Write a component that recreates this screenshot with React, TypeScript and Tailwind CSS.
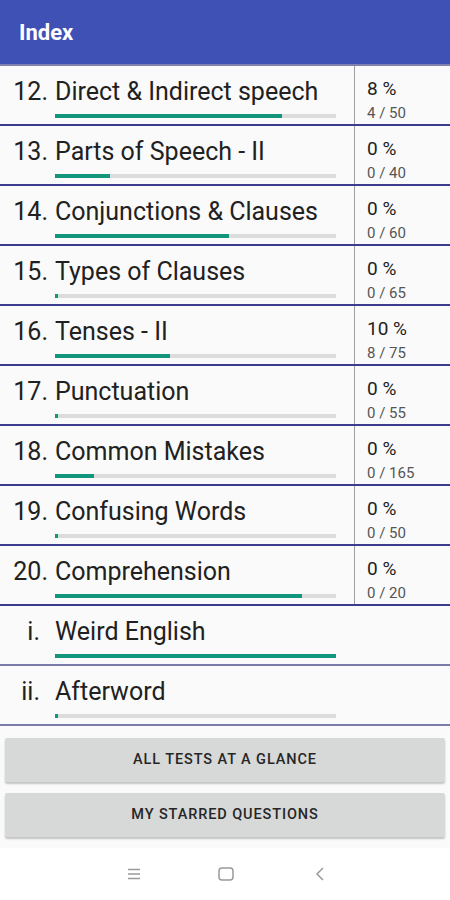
import React from 'react';

interface Chapter {
  num: string;
  title: string;
  fill: number;
  percent?: string;
  count?: string;
}

const chapters: Chapter[] = [
  { num: '12.', title: 'Direct & Indirect speech', fill: 227, percent: '8 %', count: '4 / 50' },
  { num: '13.', title: 'Parts of Speech - II', fill: 55, percent: '0 %', count: '0 / 40' },
  { num: '14.', title: 'Conjunctions & Clauses', fill: 174, percent: '0 %', count: '0 / 60' },
  { num: '15.', title: 'Types of Clauses', fill: 3, percent: '0 %', count: '0 / 65' },
  { num: '16.', title: 'Tenses - II', fill: 115, percent: '10 %', count: '8 / 75' },
  { num: '17.', title: 'Punctuation', fill: 3, percent: '0 %', count: '0 / 55' },
  { num: '18.', title: 'Common Mistakes', fill: 39, percent: '0 %', count: '0 / 165' },
  { num: '19.', title: 'Confusing Words', fill: 3, percent: '0 %', count: '0 / 50' },
  { num: '20.', title: 'Comprehension', fill: 247, percent: '0 %', count: '0 / 20' },
  { num: 'i.', title: 'Weird English', fill: 281 },
  { num: 'ii.', title: 'Afterword', fill: 3 },
];

const ChapterRow: React.FC<{ item: Chapter; last: boolean }> = ({ item, last }) => {
  const extra = !item.percent;
  return (
    <div
      className={`flex h-[60px] border-b-2 ${
        extra || last ? 'border-[#7c7aa8]' : 'border-[#3c3c8e]'
      }`}
    >
      {/* Title + progress */}
      <div className="w-[354px] shrink-0 flex pt-[11px]">
        <span
          className={`w-[48px] shrink-0 text-right text-[25px] leading-[29px] text-[#212121] ${
            extra ? 'pr-[8px]' : ''
          }`}
        >
          {item.num}
        </span>
        <div className="ml-[7px] flex flex-col">
          <span className="text-[25px] leading-[29px] text-[#212121] whitespace-nowrap">
            {item.title}
          </span>
          <div className="mt-[8px] w-[281px] h-[4px] bg-[#dcdcdc]">
            <div className="h-full bg-[#12977c]" style={{ width: item.fill }} />
          </div>
        </div>
      </div>

      {/* Score */}
      {item.percent && (
        <div className="flex-1 border-l border-[#9e9e9e] pl-[12px] pt-[12px] flex flex-col">
          <span className="text-[19px] leading-[22px] text-[#222]">{item.percent}</span>
          <span className="mt-[4px] text-[15px] leading-[18px] text-[#555]">{item.count}</span>
        </div>
      )}
    </div>
  );
};

const NavBar: React.FC = () => (
  <div className="h-[52px] bg-white flex items-center pl-[127px]">
    <svg width="14" height="12" viewBox="0 0 14 12" className="text-[#9a9a9a]">
      <path d="M1 1.5h12M1 6h12M1 10.5h12" stroke="currentColor" strokeWidth="1.5" fill="none" />
    </svg>
    <svg width="16" height="14" viewBox="0 0 16 14" className="ml-[77px] text-[#9a9a9a]">
      <rect x="1" y="1" width="14" height="12" rx="3" stroke="currentColor" strokeWidth="1.5" fill="none" />
    </svg>
    <svg width="10" height="14" viewBox="0 0 10 14" className="ml-[81px] text-[#9a9a9a]">
      <path d="M8 1L2 7l6 6" stroke="currentColor" strokeWidth="1.5" fill="none" />
    </svg>
  </div>
);

export default function App() {
  return (
    <div className="w-[450px] h-[900px] overflow-hidden bg-[#fafafa] flex flex-col font-['Roboto',sans-serif]">
      {/* Toolbar */}
      <div className="h-[64px] bg-[#3f51b5] flex items-center pl-[19px]">
        <span className="text-white text-[22px] font-bold">Index</span>
      </div>
      <div className="h-[2px] bg-[#8181b0]" />

      {/* Chapter list */}
      <div className="flex flex-col">
        {chapters.map((c, i) => (
          <ChapterRow key={c.num} item={c} last={i === chapters.length - 1} />
        ))}
      </div>

      {/* Buttons */}
      <div className="flex flex-col gap-[11px] px-[5px] pt-[12px] pb-[11px]">
        <button className="h-[44px] w-full rounded-[2px] bg-[#d7d8d8] shadow-[0_2px_2px_rgba(0,0,0,0.22)] text-[14.5px] tracking-[0.9px] font-medium text-[#262626] uppercase">
          All tests at a glance
        </button>
        <button className="h-[44px] w-full rounded-[2px] bg-[#d7d8d8] shadow-[0_2px_2px_rgba(0,0,0,0.22)] text-[14.5px] tracking-[0.9px] font-medium text-[#262626] uppercase">
          My starred questions
        </button>
      </div>

      <NavBar />
    </div>
  );
}
